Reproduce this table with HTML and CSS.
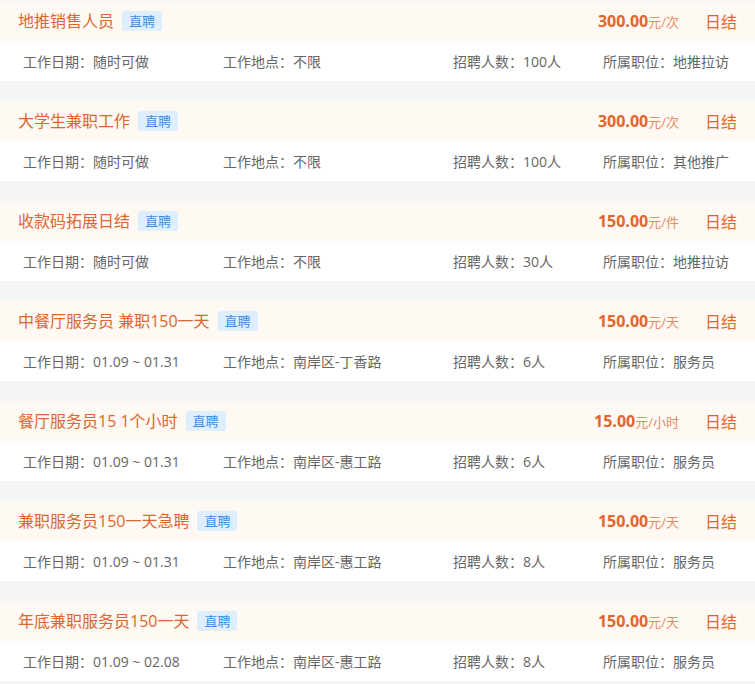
FILE: index.html
```html
<!DOCTYPE html>
<html lang="zh">
<head>
<meta charset="utf-8">
<link rel="stylesheet" href="styles.css">
</head>
<body>
<div class="list">
  <div class="card">
    <div class="head">
      <div class="title">地推销售人员</div><span class="tag">直聘</span>
      <div class="price"><b>300.00</b><span class="unit">元/次</span></div>
      <div class="settle">日结</div>
    </div>
    <div class="info">
      <span>工作日期：随时可做</span><span>工作地点：不限</span><span>招聘人数：100人</span><span>所属职位：地推拉访</span>
    </div>
  </div>
  <div class="card">
    <div class="head">
      <div class="title">大学生兼职工作</div><span class="tag">直聘</span>
      <div class="price"><b>300.00</b><span class="unit">元/次</span></div>
      <div class="settle">日结</div>
    </div>
    <div class="info">
      <span>工作日期：随时可做</span><span>工作地点：不限</span><span>招聘人数：100人</span><span>所属职位：其他推广</span>
    </div>
  </div>
  <div class="card">
    <div class="head">
      <div class="title">收款码拓展日结</div><span class="tag">直聘</span>
      <div class="price"><b>150.00</b><span class="unit">元/件</span></div>
      <div class="settle">日结</div>
    </div>
    <div class="info">
      <span>工作日期：随时可做</span><span>工作地点：不限</span><span>招聘人数：30人</span><span>所属职位：地推拉访</span>
    </div>
  </div>
  <div class="card">
    <div class="head">
      <div class="title">中餐厅服务员 兼职150一天</div><span class="tag">直聘</span>
      <div class="price"><b>150.00</b><span class="unit">元/天</span></div>
      <div class="settle">日结</div>
    </div>
    <div class="info">
      <span>工作日期：01.09 ~ 01.31</span><span>工作地点：南岸区-丁香路</span><span>招聘人数：6人</span><span>所属职位：服务员</span>
    </div>
  </div>
  <div class="card">
    <div class="head">
      <div class="title">餐厅服务员15 1个小时</div><span class="tag">直聘</span>
      <div class="price"><b>15.00</b><span class="unit">元/小时</span></div>
      <div class="settle">日结</div>
    </div>
    <div class="info">
      <span>工作日期：01.09 ~ 01.31</span><span>工作地点：南岸区-惠工路</span><span>招聘人数：6人</span><span>所属职位：服务员</span>
    </div>
  </div>
  <div class="card">
    <div class="head">
      <div class="title">兼职服务员150一天急聘</div><span class="tag">直聘</span>
      <div class="price"><b>150.00</b><span class="unit">元/天</span></div>
      <div class="settle">日结</div>
    </div>
    <div class="info">
      <span>工作日期：01.09 ~ 01.31</span><span>工作地点：南岸区-惠工路</span><span>招聘人数：8人</span><span>所属职位：服务员</span>
    </div>
  </div>
  <div class="card">
    <div class="head">
      <div class="title">年底兼职服务员150一天</div><span class="tag">直聘</span>
      <div class="price"><b>150.00</b><span class="unit">元/天</span></div>
      <div class="settle">日结</div>
    </div>
    <div class="info">
      <span>工作日期：01.09 ~ 02.08</span><span>工作地点：南岸区-惠工路</span><span>招聘人数：8人</span><span>所属职位：服务员</span>
    </div>
  </div>
</div>
</body>
</html>
```

FILE: styles.css
```css
html, body {
  margin: 0;
  padding: 0;
  background: #f5f5f5;
}
body {
  font-family: "Open Sans", "Noto Sans CJK SC", sans-serif;
  padding-top: 1px;
}
.list {
  display: flex;
  flex-direction: column;
  gap: 20px;
}
.card {
  display: flex;
  flex-direction: column;
}
.head {
  height: 40px;
  background: #fff9f4;
  display: flex;
  align-items: center;
  padding: 0 18px;
}
.title {
  font-size: 16px;
  color: #e0652e;
  line-height: 20px;
}
.tag {
  margin-left: 8px;
  height: 20px;
  line-height: 20px;
  padding: 0 7px;
  font-size: 13px;
  color: #3b8ee3;
  background: #deeefd;
  border-radius: 2px;
}
.price {
  margin-left: auto;
  margin-right: -2px;
  color: #e0652e;
  display: flex;
  align-items: baseline;
}
.price b {
  font-size: 16px;
  font-weight: 700;
}
.unit {
  font-size: 13px;
  color: #e78b62;
}
.settle {
  margin-left: 28px;
  font-size: 16px;
  color: #e0652e;
}
.info {
  height: 40px;
  background: #fff;
  display: grid;
  grid-template-columns: 200px 230px 150px auto;
  align-items: center;
  padding-left: 23px;
  padding-bottom: 1px;
  box-sizing: border-box;
  font-size: 14px;
  color: #666;
}
```
